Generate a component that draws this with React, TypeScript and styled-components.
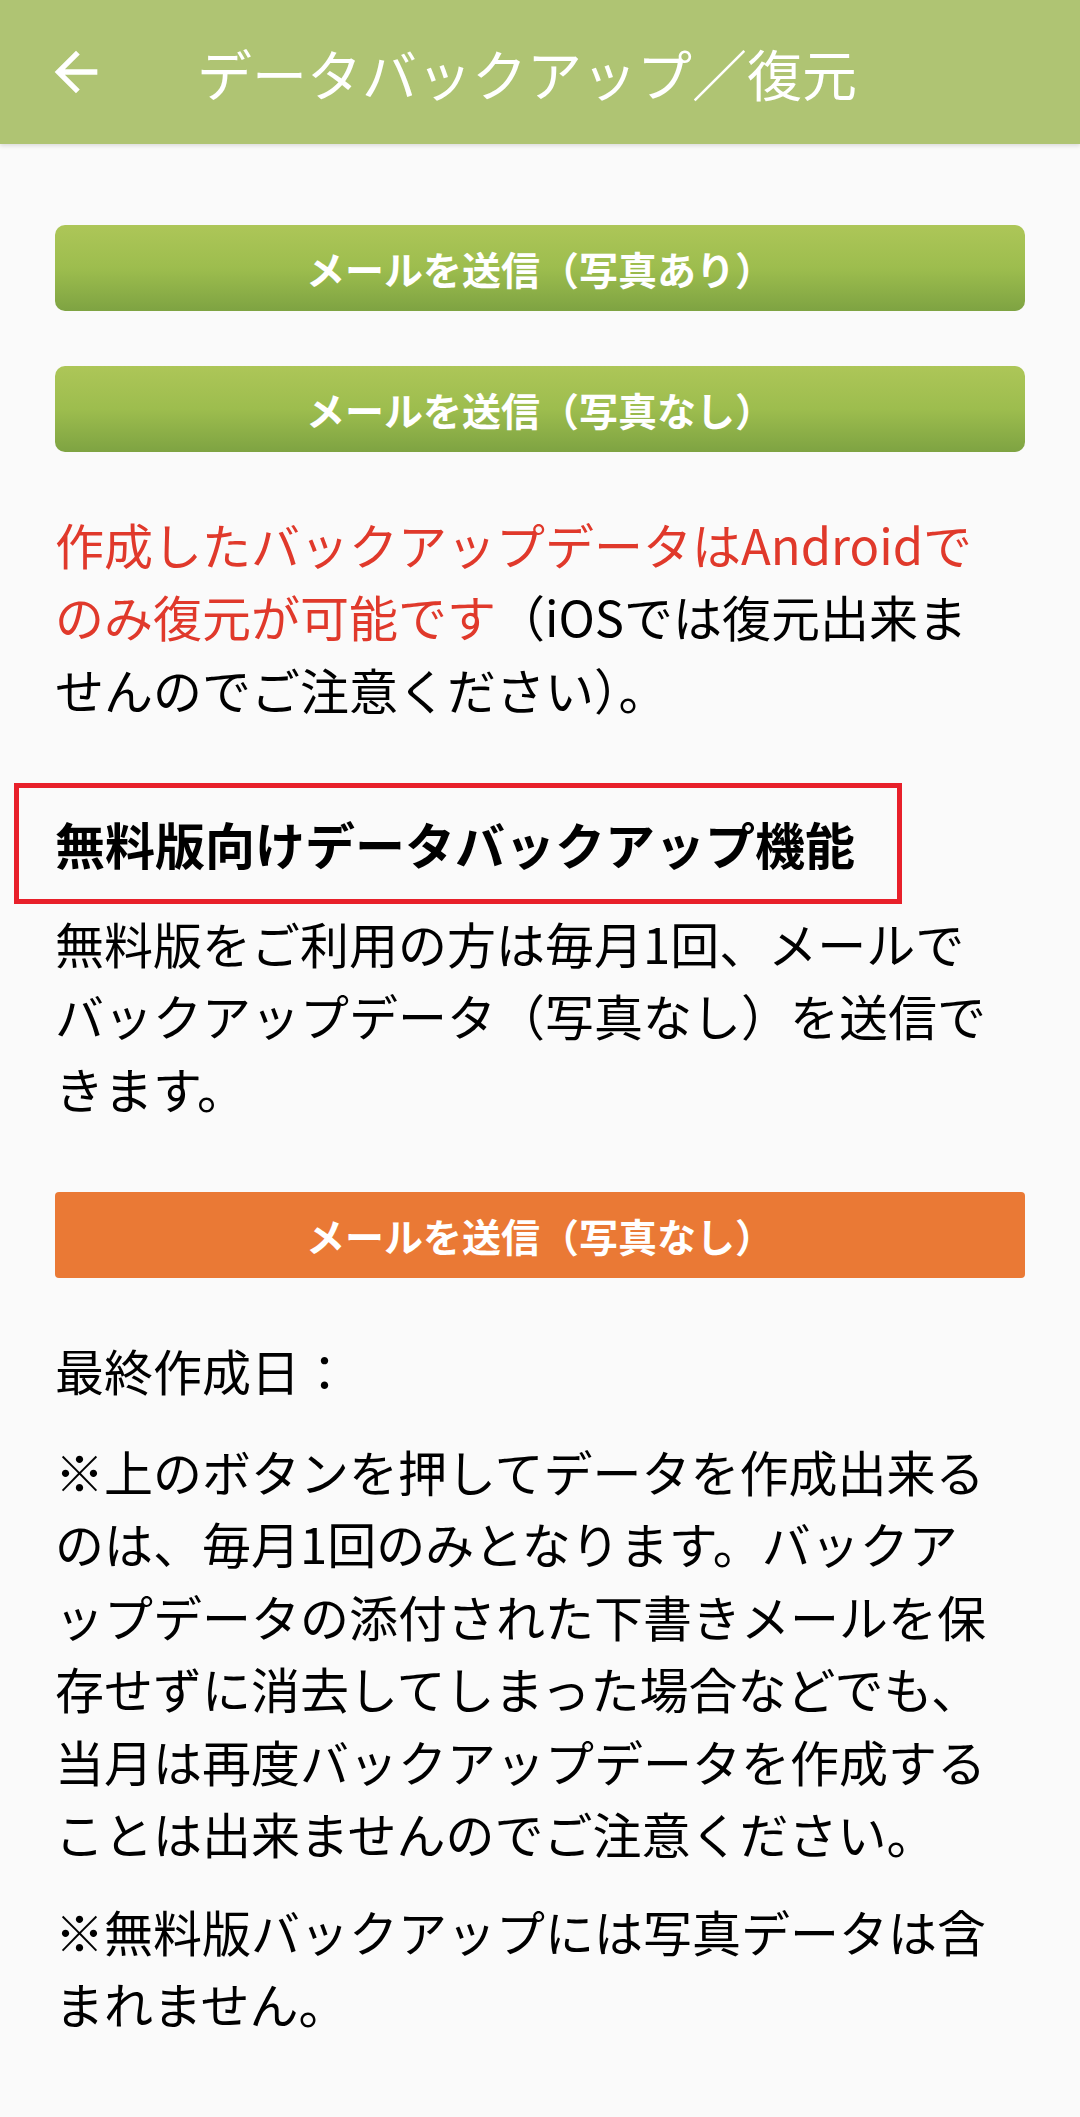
import * as React from 'react'
import styled, { createGlobalStyle } from 'styled-components'

const GlobalStyle = createGlobalStyle`
  html, body {
    margin: 0;
    padding: 0;
    background: #fafafa;
  }
  body {
    font-family: 'Noto Sans CJK JP', 'Noto Sans', sans-serif;
    color: #000;
  }
`
const Page = styled.div`
  min-height: 2117px;
  background: #fafafa;
`
const Header = styled.header`
  display: flex;
  align-items: center;
  height: 144px;
  background: #afc473;
  box-shadow: 0 2px 4px rgba(0, 0, 0, 0.12);
  position: relative;
  z-index: 1;
`
const BackButton = styled.button`
  display: flex;
  align-items: center;
  justify-content: center;
  background: none;
  border: none;
  padding: 0;
  margin-left: 44px;
  width: 64px;
  height: 64px;
  cursor: pointer;
`
const Title = styled.h1`
  margin: 0 0 0 89px;
  font-size: 55px;
  font-weight: 400;
  color: #fff;
`
const Content = styled.main`
  display: flex;
  flex-direction: column;
  padding: 81px 55px 0;
`
const SendButton = styled.button<{ $variant: 'green' | 'orange'; $gap?: number }>`
  display: flex;
  align-items: center;
  justify-content: center;
  height: 86px;
  width: 100%;
  margin-top: ${({ $gap }) => $gap ?? 0}px;
  border: none;
  border-radius: ${({ $variant }) => ($variant === 'green' ? '10px' : '4px')};
  background: ${({ $variant }) =>
    $variant === 'green'
      ? 'linear-gradient(180deg, #adc658 0%, #9dbd4e 50%, #7ea342 100%)'
      : '#ea7935'};
  color: #fff;
  font-family: 'Noto Sans CJK JP', sans-serif;
  font-size: 39px;
  font-weight: 700;
  cursor: pointer;
`
const Paragraph = styled.p<{ $gap: number }>`
  margin: ${({ $gap }) => $gap}px 25px 0 0;
  font-size: 49px;
  line-height: 72.5px;
`
const Warning = styled.span`
  color: #e0392b;
`
const HeadingBox = styled.div`
  display: flex;
  align-items: center;
  align-self: flex-start;
  box-sizing: border-box;
  width: 888px;
  height: 121px;
  margin: 58px 0 0 -41px;
  padding-left: 36px;
  border: 5px solid #e8202a;
`
const Heading = styled.h2`
  margin: 0;
  font-size: 50px;
  font-weight: 700;
  line-height: 72.5px;
`

const BackArrow = () => (
  <svg width="64" height="64" viewBox="0 0 24 24" fill="#fff">
    <path d="M20 11H7.83l5.59-5.59L12 4l-8 8 8 8 1.41-1.41L7.83 13H20v-2z" />
  </svg>
)

export default function App() {
  return (
    <Page>
      <GlobalStyle />
      <Header>
        <BackButton aria-label="back">
          <BackArrow />
        </BackButton>
        <Title>データバックアップ／復元</Title>
      </Header>
      <Content>
        <SendButton $variant="green">メールを送信（写真あり）</SendButton>
        <SendButton $variant="green" $gap={55}>
          メールを送信（写真なし）
        </SendButton>
        <Paragraph $gap={55.5}>
          <Warning>作成したバックアップデータはAndroidでのみ復元が可能です</Warning>
          （iOSでは復元出来ませんのでご注意ください）。
        </Paragraph>
        <HeadingBox>
          <Heading>無料版向けデータバックアップ機能</Heading>
        </HeadingBox>
        <Paragraph $gap={2.5}>
          無料版をご利用の方は毎月1回、メールでバックアップデータ（写真なし）を送信できます。
        </Paragraph>
        <SendButton $variant="orange" $gap={68}>
          メールを送信（写真なし）
        </SendButton>
        <Paragraph $gap={55.5}>最終作成日：</Paragraph>
        <Paragraph $gap={28.5}>
          ※上のボタンを押してデータを作成出来るのは、毎月1回のみとなります。バックアップデータの添付された下書きメールを保存せずに消去してしまった場合などでも、当月は再度バックアップデータを作成することは出来ませんのでご注意ください。
        </Paragraph>
        <Paragraph $gap={25}>
          ※無料版バックアップには写真データは含まれません。
        </Paragraph>
      </Content>
    </Page>
  )
}
